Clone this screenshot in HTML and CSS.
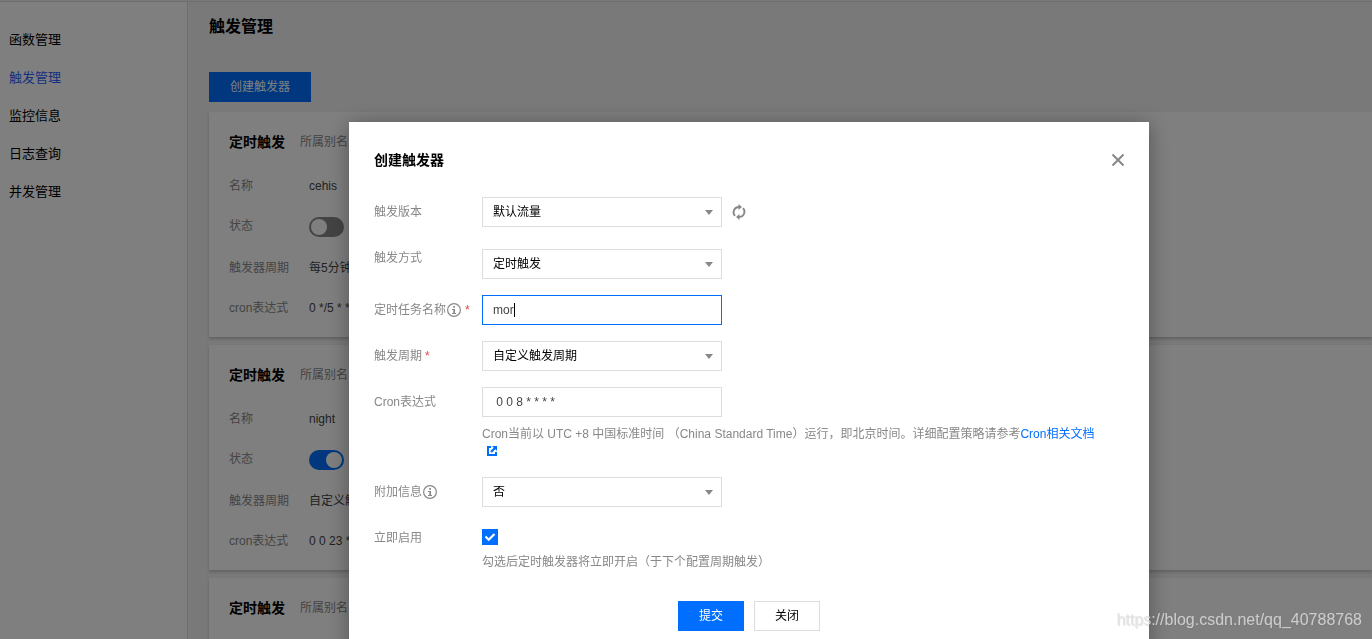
FILE: index.html
```html
<!DOCTYPE html>
<html lang="zh-CN">
<head>
<meta charset="utf-8">
<title>触发管理</title>
<link rel="stylesheet" href="styles.css">
</head>
<body>
<div class="app">
  <nav class="sidebar">
    <a class="nav-item" href="#">函数管理</a>
    <a class="nav-item active" href="#">触发管理</a>
    <a class="nav-item" href="#">监控信息</a>
    <a class="nav-item" href="#">日志查询</a>
    <a class="nav-item" href="#">并发管理</a>
  </nav>
  <main class="main">
    <h1 class="page-title">触发管理</h1>
    <button class="btn btn-primary btn-create" type="button">创建触发器</button>
    <div class="cards">
      <section class="card">
        <header class="card-head"><h2 class="card-title">定时触发</h2><span class="alias">所属别名</span></header>
        <dl class="details">
          <dt>名称</dt><dd>cehis</dd>
          <dt>状态</dt><dd class="state"><input class="switch" type="checkbox" aria-label="状态"></dd>
          <dt>触发器周期</dt><dd>每5分钟</dd>
          <dt>cron表达式</dt><dd>0 */5 * * * * *</dd>
        </dl>
      </section>
      <section class="card">
        <header class="card-head"><h2 class="card-title">定时触发</h2><span class="alias">所属别名</span></header>
        <dl class="details">
          <dt>名称</dt><dd>night</dd>
          <dt>状态</dt><dd class="state"><input class="switch" type="checkbox" aria-label="状态" checked></dd>
          <dt>触发器周期</dt><dd>自定义触发周期</dd>
          <dt>cron表达式</dt><dd>0 0 23 * * * *</dd>
        </dl>
      </section>
      <section class="card">
        <header class="card-head"><h2 class="card-title">定时触发</h2><span class="alias">所属别名</span></header>
      </section>
    </div>
  </main>
</div>

<div class="overlay">
  <form class="dialog" role="dialog" aria-labelledby="dialog-title">
    <header class="dialog-head">
      <h2 class="dialog-title" id="dialog-title">创建触发器</h2>
      <button class="icon-btn" type="button" aria-label="关闭窗口">
        <svg width="16" height="16" viewBox="0 0 16 16" fill="none" stroke="#888" stroke-width="2"><path d="M2.500 2.500l11 11M13.500 2.500l-11 11"/></svg>
      </button>
    </header>
    <div class="form">
      <div class="row">
        <label class="label" for="version">触发版本</label>
        <div class="field inline">
          <span class="select"><select id="version"><option>默认流量</option></select></span>
          <button class="icon-btn" type="button" aria-label="刷新">
            <svg width="16" height="16" viewBox="0 0 16 16"><g fill="none" stroke="#888" stroke-width="1.800"><path d="M4 11.800A5.200 5.200 0 0 1 8 3"/><path d="M12 4.200A5.200 5.200 0 0 1 8 13"/></g><path fill="#888" d="M7.500 0l3.500 3-3.500 3zM8.500 10L5 13l3.500 3z"/></svg>
          </button>
        </div>
      </div>
      <div class="row">
        <label class="label" for="mode">触发方式</label>
        <div class="field lowered"><span class="select"><select id="mode"><option>定时触发</option></select></span></div>
      </div>
      <div class="row">
        <label class="label" for="task">定时任务名称<svg class="info" width="16" height="16" viewBox="0 0 16 16"><circle cx="8" cy="8" r="6.400" fill="none" stroke="#888" stroke-width="1.200"/><path fill="#888" d="M7.200 4h1.800v1.700H7.200zM6 7h3v4h1v1H6v-1h1.300V8H6z"/></svg><span class="required">*</span></label>
        <div class="field text-wrap"><input class="text focused" id="task" type="text" value="mor"><span class="caret"></span></div>
      </div>
      <div class="row">
        <label class="label" for="period">触发周期<span class="required">*</span></label>
        <div class="field"><span class="select"><select id="period"><option>自定义触发周期</option></select></span></div>
      </div>
      <div class="row">
        <label class="label" for="cron">Cron表达式</label>
        <div class="field">
          <input class="text" id="cron" type="text" value=" 0 0 8 * * * *">
          <p class="hint hint-narrow">Cron当前以 UTC +8 中国标准时间 （China Standard Time）运行，即北京时间。详细配置策略请参考<a class="link" href="#">Cron相关文档 <svg class="external" width="10" height="10" viewBox="0 0 10 10"><path fill="#006eff" d="M0 0h4v2H2v6h6V6h2v4H0zM5 0h5v5L8.300 3.300 4.800 6.800 3.200 5.200 6.700 1.700z"/></svg></a></p>
        </div>
      </div>
      <div class="row">
        <label class="label" for="extra">附加信息<svg class="info" width="16" height="16" viewBox="0 0 16 16"><circle cx="8" cy="8" r="6.400" fill="none" stroke="#888" stroke-width="1.200"/><path fill="#888" d="M7.200 4h1.800v1.700H7.200zM6 7h3v4h1v1H6v-1h1.300V8H6z"/></svg></label>
        <div class="field"><span class="select"><select id="extra"><option>否</option></select></span></div>
      </div>
      <div class="row">
        <label class="label" for="enable">立即启用</label>
        <div class="field lowered">
          <span class="check"><input id="enable" type="checkbox" checked><svg width="16" height="16" viewBox="0 0 16 16" fill="none" stroke="#fff" stroke-width="2.200"><path d="M3.500 7.500l3.200 3.200L12.500 5"/></svg></span>
          <p class="hint">勾选后定时触发器将立即开启（于下个配置周期触发）</p>
        </div>
      </div>
    </div>
    <footer class="actions">
      <button class="btn btn-primary" type="button">提交</button>
      <button class="btn btn-plain" type="button">关闭</button>
    </footer>
  </form>
</div>
<div class="watermark">https://blog.csdn.net/qq_40788768</div>
</body>
</html>
```
FILE: styles.css
```css
* { box-sizing: border-box; }

body {
  margin: 0;
  height: 100vh;
  overflow: hidden;
  font: 12px/20px "Liberation Sans", "Noto Sans CJK SC", sans-serif;
  color: #000;
}

h1, h2, p, dl, dd { margin: 0; }
button, input, select { font: inherit; }

.app {
  display: flex;
  height: 100vh;
  padding-top: 1px;
  background: #f2f2f2;
  overflow: hidden;
}

.sidebar {
  flex: none;
  width: 188px;
  padding-top: 19px;
  background: #fff;
  border-top: 1px solid #ddd;
  border-right: 1px solid #ddd;
}

.nav-item {
  display: block;
  padding-left: 9px;
  font-size: 13px;
  line-height: 38px;
  color: #000;
  text-decoration: none;
}

.nav-item.active { color: #2b62ff; }

.main {
  flex: 1;
  min-width: 0;
  padding: 12px 0 0 21px;
  border-top: 1px solid #ddd;
}

.page-title {
  margin-bottom: 32px;
  font-size: 16px;
  line-height: 26px;
}

.btn {
  min-width: 66px;
  height: 30px;
  padding: 0 20px;
  border: 1px solid #006eff;
  line-height: 28px;
}

.btn-primary { background: #006eff; color: #fff; }
.btn-plain { background: #fff; border-color: #ddd; color: #000; }
.btn-create { display: block; }

.cards {
  display: grid;
  gap: 8px;
  margin-top: 10px;
}

.card {
  min-height: 225px;
  padding: 20px 20px 19px;
  background: #fff;
  box-shadow: 0 2px 3px rgba(0, 0, 0, .2);
}

.card-head {
  display: flex;
  align-items: center;
  gap: 15px;
  margin-bottom: 24px;
}

.card-title { font-size: 14px; line-height: 20px; }
.alias { color: #888; }

.details {
  display: grid;
  grid-template-columns: 80px 1fr;
  row-gap: 20px;
}

.details dt { color: #888; }
.details dd { color: #444; }
.state { display: flex; padding-top: 1px; height: 22px; }

.switch {
  appearance: none;
  width: 35px;
  height: 20px;
  margin: 0;
  padding: 2px;
  border-radius: 10px;
  background: #888;
}

.switch::before {
  content: "";
  display: block;
  width: 16px;
  height: 16px;
  border-radius: 50%;
  background: #fff;
}

.switch:checked { background: #006eff; }
.switch:checked::before { margin-left: auto; }

.overlay {
  position: fixed;
  inset: 0;
  display: flex;
  justify-content: center;
  align-items: flex-start;
  padding: 122px 0 0 126px;
  background: rgba(0, 0, 0, .5);
  overflow: hidden;
}

.dialog {
  width: 800px;
  padding: 25px;
  background: #fff;
  box-shadow: 0 2px 20px rgba(0, 0, 0, .35);
}

.dialog-head {
  display: flex;
  justify-content: space-between;
  align-items: center;
  height: 26px;
  margin-bottom: 24px;
}

.dialog-title { font-size: 14px; line-height: 24px; }

.icon-btn {
  display: flex;
  padding: 0;
  border: 0;
  background: none;
}

.dialog-head .icon-btn { margin-right: -2px; }

.form { display: grid; gap: 16px; }

.row {
  display: grid;
  grid-template-columns: 108px 1fr;
  align-items: start;
}

.label {
  display: flex;
  align-items: center;
  height: 30px;
  color: #888;
}

.required { margin-left: 3px; color: #e54545; }
.info { flex: none; }

.field { color: #888; }
.inline { display: flex; align-items: center; gap: 9px; }
.lowered { padding-top: 6px; }

.select {
  position: relative;
  display: block;
  width: 240px;
  height: 30px;
}

.select::after {
  content: "";
  position: absolute;
  top: 13px;
  right: 9px;
  border: 4px solid transparent;
  border-top: 5px solid #888;
  border-bottom: 0;
  pointer-events: none;
}

.select select, .text {
  appearance: none;
  display: block;
  width: 240px;
  height: 30px;
  margin: 0;
  padding: 0 10px;
  border: 1px solid #ddd;
  border-radius: 0;
  background: #fff;
  color: #000;
  outline: 0;
}

.text { color: #444; }
.text.focused { border-color: #006eff; }
.text-wrap { position: relative; }

.caret {
  position: absolute;
  top: 8px;
  left: 32px;
  width: 1px;
  height: 14px;
  background: #000;
}

.hint { margin-top: 8px; line-height: 18px; }
.hint-narrow { padding-right: 25px; }
.link { color: #006eff; text-decoration: none; }
.external { margin-left: 5px; }

.check {
  position: relative;
  display: block;
  width: 16px;
  height: 16px;
}

.check input {
  appearance: none;
  display: block;
  width: 16px;
  height: 16px;
  margin: 0;
  background: #006eff;
}

.check svg { position: absolute; inset: 0; pointer-events: none; }

.actions {
  display: flex;
  justify-content: center;
  gap: 10px;
  margin-top: 30px;
}

.watermark {
  position: fixed;
  right: 10px;
  bottom: 9px;
  font-size: 16px;
  color: rgba(225, 225, 225, .8);
  text-shadow: 1px 1px 1px rgba(100, 100, 100, .2);
}
```
